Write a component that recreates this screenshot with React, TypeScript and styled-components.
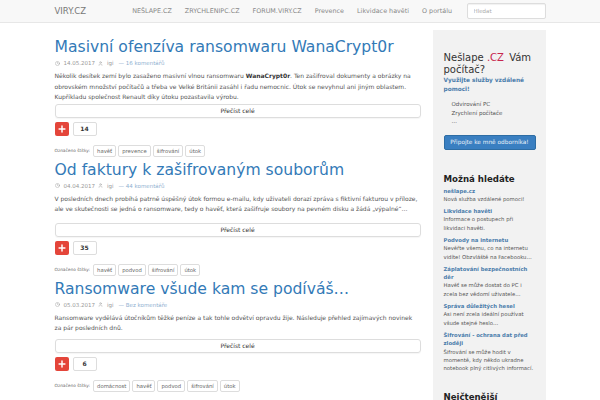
import React from "react";
import styled, { createGlobalStyle } from "styled-components";
import { Clock, User, Plus } from "lucide-react";

interface Post {
  title: string;
  date: string;
  author: string;
  comments: string;
  excerpt: React.ReactNode;
  votes: number;
  tags: string[];
  space: number;
}

const posts: Post[] = [
  {
    title: "Masivní ofenzíva ransomwaru WanaCrypt0r",
    date: "14.05.2017",
    author: "igi",
    comments: "16 komentářů",
    excerpt: (
      <>
        Několik desítek zemí bylo zasaženo masivní vlnou ransomwaru <b>WanaCrypt0r</b>. Ten zašifroval dokumenty a obrázky na
        obrovském množství počítačů a třeba ve Velké Británii zasáhl i řadu nemocnic. Útok se nevyhnul ani jiným oblastem.
        Kupříkladu společnost Renault díky útoku pozastavila výrobu.
      </>
    ),
    votes: 14,
    tags: ["havěť", "prevence", "šifrování", "útok"],
    space: 1,
  },
  {
    title: "Od faktury k zašifrovaným souborům",
    date: "04.04.2017",
    author: "igi",
    comments: "44 komentářů",
    excerpt: (
      <>
        V posledních dnech probíhá patrně úspěšný útok formou e-mailu, kdy uživateli dorazí zpráva s fiktivní fakturou v příloze, ale
        ve skutečnosti se jedná o ransomware, tedy o havěť, která zašifruje soubory na pevném disku a žádá „výpalné“…
      </>
    ),
    votes: 35,
    tags: ["havěť", "podvod", "šifrování", "útok"],
    space: 8,
  },
  {
    title: "Ransomware všude kam se podíváš…",
    date: "05.03.2017",
    author: "igi",
    comments: "Bez komentáře",
    excerpt: (
      <>
        Ransomware vydělává útočníkům těžké peníze a tak tohle odvětví opravdu žije. Následuje přehled zajímavých novinek za
        pár posledních dnů.
      </>
    ),
    votes: 6,
    tags: ["domácnost", "havěť", "podvod", "šifrování", "útok"],
    space: 5,
  },
];

const related = [
  { title: "nešlape.cz", text: "Nová služba vzdálené pomoci!" },
  { title: "Likvidace havěti", text: "Informace o postupech při likvidaci havěti." },
  { title: "Podvody na internetu", text: "Nevěřte všemu, co na internetu vidíte! Obzvláště na Facebooku…" },
  { title: "Záplatování bezpečnostních děr", text: "Havěť se může dostat do PC i zcela bez vědomí uživatele…" },
  { title: "Správa důležitých hesel", text: "Asi není zcela ideální používat všude stejné heslo…" },
  { title: "Šifrování - ochrana dat před zloději", text: "Šifrování se může hodit v momentě, kdy někdo ukradne notebook plný citlivých informací." },
];

const GlobalStyle = createGlobalStyle`
  body {
    margin: 0;
    background: #fff;
    font-family: "DejaVu Sans", Verdana, sans-serif;
    color: #555;
  }
`;

const Navbar = styled.nav`
  height: 22px;
  background: #f8f8f8;
  border-bottom: 1px solid #e7e7e7;
`;

const NavInner = styled.div`
  width: 491px;
  height: 100%;
  margin: 0 auto;
  display: flex;
  align-items: center;
`;

const Brand = styled.a`
  font-size: 8.5px;
  color: #777;
  margin-right: 46px;
`;

const NavLink = styled.a<{ $upper?: boolean }>`
  font-size: 6.4px;
  color: #888;
  margin-right: 13px;
  text-transform: ${(p) => (p.$upper ? "uppercase" : "none")};
`;

const Search = styled.input`
  margin-left: auto;
  width: 79px;
  height: 16px;
  box-sizing: border-box;
  border: 1px solid #ddd;
  border-radius: 2px;
  padding: 0 6px;
  font-family: inherit;
  font-size: 5.5px;
  color: #999;
  box-shadow: inset 0 1px 1px rgba(0, 0, 0, 0.06);
  &::placeholder {
    color: #aaa;
  }
`;

const Container = styled.div`
  width: 491px;
  margin: 0 auto;
  padding-top: 7px;
  display: flex;
  gap: 12px;
  align-items: flex-start;
`;

const Main = styled.main`
  width: 366px;
  padding-top: 5px;
`;

const Article = styled.article`
  margin-bottom: 1px;
`;

const Title = styled.h2`
  margin: 0;
  font-size: 15.6px;
  line-height: 24px;
  font-weight: normal;
  color: #337ab7;
  white-space: nowrap;
`;

const Meta = styled.div`
  display: flex;
  align-items: center;
  gap: 3px;
  font-size: 5.5px;
  color: #999;
  height: 8px;
  margin: 0 0 4px;
  svg {
    margin-right: 1px;
  }
`;

const MetaLink = styled.span`
  color: #8fb0d0;
  margin-left: 2px;
`;

const Excerpt = styled.p<{ $space: number }>`
  margin: 0 0 ${(p) => p.$space}px;
  font-size: 6px;
  line-height: 10.5px;
  color: #555;
  b {
    color: #333;
  }
`;

const ReadMore = styled.div`
  height: 14px;
  border: 1px solid #ddd;
  border-radius: 3px;
  box-sizing: border-box;
  display: flex;
  align-items: center;
  justify-content: center;
  font-size: 6px;
  color: #333;
  box-shadow: 0 1px 1px rgba(0, 0, 0, 0.04);
`;

const VoteRow = styled.div`
  display: flex;
  gap: 4px;
  margin-top: 4px;
`;

const PlusButton = styled.div`
  width: 14px;
  height: 14px;
  background: #e4453a;
  border-radius: 2px;
  display: flex;
  align-items: center;
  justify-content: center;
`;

const Count = styled.div`
  width: 24px;
  height: 14px;
  box-sizing: border-box;
  border: 1px solid #ddd;
  border-radius: 2px;
  display: flex;
  align-items: center;
  justify-content: center;
  font-size: 6px;
  font-weight: bold;
  color: #333;
`;

const Tags = styled.div`
  display: flex;
  align-items: center;
  gap: 2px;
  margin-top: 9px;
  height: 12px;
  font-size: 4.3px;
  color: #666;
`;

const TagLabel = styled.span`
  margin-right: 1px;
`;

const Tag = styled.span`
  border: 1px solid #ddd;
  border-radius: 2px;
  padding: 2px 3px;
  font-size: 5.3px;
  color: #666;
`;

const Sidebar = styled.aside`
  width: 113px;
  min-height: 380px;
  background: #f2f2f2;
  padding: 22px 10px 0 11px;
  box-sizing: border-box;
`;

const PromoTitle = styled.h3`
  margin: 0;
  font-size: 10px;
  line-height: 12px;
  font-weight: normal;
  color: #333;
  span {
    color: #c7254e;
    margin-right: 2px;
  }
`;

const PromoLead = styled.p`
  margin: 0 0 6px;
  font-size: 5.8px;
  line-height: 9px;
  font-weight: bold;
  color: #4a7cab;
`;

const PromoList = styled.ul`
  margin: 0 0 9px;
  padding-left: 8px;
  list-style: none;
  font-size: 5.5px;
  line-height: 8.5px;
  color: #555;
`;

const PromoButton = styled.div`
  width: 92px;
  height: 15px;
  background: #3a7fc1;
  border: 1px solid #2e6da4;
  box-sizing: border-box;
  border-radius: 2px;
  display: flex;
  align-items: center;
  justify-content: center;
  font-size: 5.8px;
  color: #e8f0f8;
`;

const SideHeading = styled.h3<{ $top: number }>`
  margin: ${(p) => p.$top}px 0 3px;
  font-size: 8.6px;
  line-height: 10px;
  font-weight: bold;
  color: #222;
`;

const RelatedItem = styled.div`
  margin-bottom: 4px;
  font-size: 5.3px;
  line-height: 8.3px;
`;

const RelatedLink = styled.a`
  display: block;
  font-weight: bold;
  color: #4a7cab;
`;

const RelatedText = styled.div`
  color: #555;
`;

export default function App() {
  return (
    <>
      <GlobalStyle />
      <Navbar>
        <NavInner>
          <Brand>VIRY.CZ</Brand>
          <NavLink $upper>nešlape.cz</NavLink>
          <NavLink $upper>zrychlenipc.cz</NavLink>
          <NavLink $upper>forum.viry.cz</NavLink>
          <NavLink>Prevence</NavLink>
          <NavLink>Likvidace havěti</NavLink>
          <NavLink>O portálu</NavLink>
          <Search placeholder="Hledat" />
        </NavInner>
      </Navbar>
      <Container>
        <Main>
          {posts.map((post) => (
            <Article key={post.title}>
              <Title>{post.title}</Title>
              <Meta>
                <Clock size={5} />
                {post.date}
                <User size={5} />
                {post.author}
                <MetaLink>— {post.comments}</MetaLink>
              </Meta>
              <Excerpt $space={post.space}>{post.excerpt}</Excerpt>
              <ReadMore>Přečíst celé</ReadMore>
              <VoteRow>
                <PlusButton>
                  <Plus size={10} color="#fff" strokeWidth={3.5} />
                </PlusButton>
                <Count>{post.votes}</Count>
              </VoteRow>
              <Tags>
                <TagLabel>Označeno štítky:</TagLabel>
                {post.tags.map((t) => (
                  <Tag key={t}>{t}</Tag>
                ))}
              </Tags>
            </Article>
          ))}
        </Main>
        <Sidebar>
          <PromoTitle>
            Nešlape <span>.CZ</span> Vám počítač?
          </PromoTitle>
          <PromoLead>Využijte služby vzdálené pomoci!</PromoLead>
          <PromoList>
            <li>Odvirování PC</li>
            <li>Zrychlení počítače</li>
            <li>…</li>
          </PromoList>
          <PromoButton>Připojte ke mně odborníka!</PromoButton>
          <SideHeading $top={24}>Možná hledáte</SideHeading>
          {related.map((r) => (
            <RelatedItem key={r.title}>
              <RelatedLink>{r.title}</RelatedLink>
              <RelatedText>{r.text}</RelatedText>
            </RelatedItem>
          ))}
          <SideHeading $top={20}>Nejčtenější</SideHeading>
        </Sidebar>
      </Container>
    </>
  );
}
